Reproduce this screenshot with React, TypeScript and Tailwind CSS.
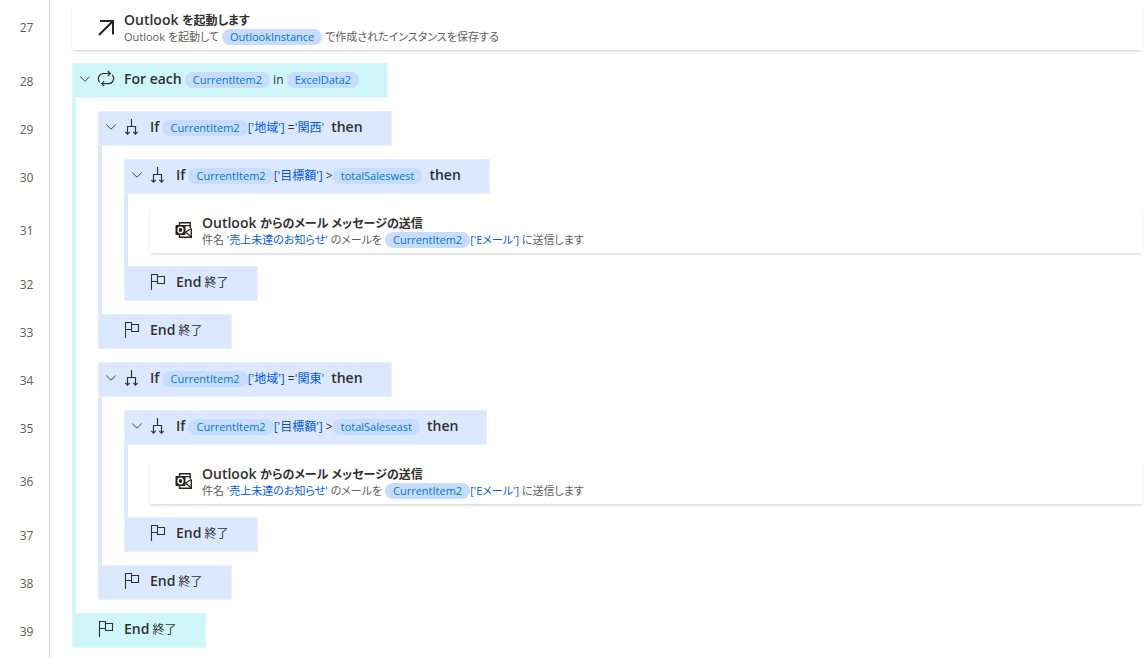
import React from 'react';
import type { ReactNode } from 'react';
import clsx from 'clsx';

type Tone = 'loop' | 'condition';

const LINES = [27, 28, 29, 30, 31, 32, 33, 34, 35, 36, 37, 38, 39];
const CARD_LINES = [27, 31, 36];

const toneBox: Record<Tone, string> = {
  loop: 'bg-[#cff6f9] border-[#dcf9fb]',
  condition: 'bg-[#dbe8ff] border-[#e7f0ff]',
};

const toneBar: Record<Tone, string> = {
  loop: 'border-[#cff6f9]',
  condition: 'border-[#dbe8ff]',
};

function ChevronIcon() {
  return (
    <svg viewBox="0 0 12 12" className="size-3" fill="none" stroke="#484644">
      <path d="M1.2 3.5 6 8.2l4.8-4.7" />
    </svg>
  );
}

function LaunchIcon() {
  return (
    <svg viewBox="0 0 18 18" className="size-[18px] shrink-0" fill="none" stroke="#252423" strokeWidth="2">
      <path d="M3 3h13v13.5M16 3 2 17" />
    </svg>
  );
}

function LoopIcon() {
  return (
    <svg viewBox="0 0 18 18" className="size-[18px] shrink-0" fill="none" stroke="#323130" strokeWidth="1.2">
      <path d="M2.8 12.4A5.3 5.3 0 0 1 6.5 3.5h6.6M15.2 4.8A5.3 5.3 0 0 1 11.5 13.7H4.9" />
      <path d="M10.8 1l2.5 2.5L10.8 6M7.2 11.2l-2.5 2.5 2.5 2.5" />
    </svg>
  );
}

function BranchIcon() {
  return (
    <svg viewBox="0 0 18 18" className="size-[18px] shrink-0" fill="none" stroke="#323130" strokeWidth="1.2">
      <path d="M8.5 1v7.5M4.5 16v-7.5h8V16" />
      <path d="M2.3 13.9l2.2 2.2 2.2-2.2M10.3 13.9l2.2 2.2 2.2-2.2" />
    </svg>
  );
}

function FlagIcon() {
  return (
    <svg viewBox="0 0 18 18" className="size-[18px] shrink-0" fill="none" stroke="#323130" strokeWidth="1.1">
      <path d="M2.5 17V1.5h6v7h-6M8.5 3.5h7v7h-7v-2" />
    </svg>
  );
}

function OutlookIcon() {
  return (
    <svg viewBox="0 0 18 18" className="size-[18px] shrink-0" fill="none">
      <path d="M4.5 5V1.8h10.7V7M16.3 7.5v8.8H4.5V13" stroke="#252423" strokeWidth="1.4" />
      <path d="M10 4.6h5.2M16.3 7.5 10.5 11l5.8 5" stroke="#252423" strokeWidth="1.2" />
      <rect x="0.5" y="4" width="10" height="10" rx="0.8" fill="#252423" />
      <ellipse cx="5.5" cy="9" rx="2.4" ry="2.7" stroke="#fff" strokeWidth="1.4" />
    </svg>
  );
}

function Variable({ children }: { children: ReactNode }) {
  return (
    <span className="inline-block h-4 rounded-full bg-[#c7dcff] px-2 text-[11px] leading-4 text-[#0078d4]">
      {children}
    </span>
  );
}

function Literal({ children }: { children: ReactNode }) {
  return <span className="text-[#0058f0]">{children}</span>;
}

function Keyword({ children, spaced }: { children: ReactNode; spaced?: boolean }) {
  return <span className={clsx('text-sm leading-5 font-semibold', spaced && 'ml-1')}>{children}</span>;
}

function Statement({ tone, icon, collapsible, children }: {
  tone: Tone;
  icon: ReactNode;
  collapsible?: boolean;
  children: ReactNode;
}) {
  return (
    <div className={clsx('flex h-[35px] w-fit items-center border pr-7 pb-[3px] pl-[6px] whitespace-nowrap', toneBox[tone])}>
      <div className="flex w-[18px] shrink-0 items-center">
        {collapsible && (
          <button type="button" aria-label="折りたたむ">
            <ChevronIcon />
          </button>
        )}
      </div>
      {icon}
      <div className="ml-[9px] pt-px text-xs leading-5">{children}</div>
    </div>
  );
}

function Block({ tone, icon, header, children }: {
  tone: Tone;
  icon: ReactNode;
  header: ReactNode;
  children: ReactNode;
}) {
  return (
    <div>
      <Statement tone={tone} icon={icon} collapsible>
        {header}
      </Statement>
      <div className={clsx('flex flex-col gap-[13px] border-l-4 py-[13px] pl-[22px]', toneBar[tone])}>
        {children}
      </div>
      <Statement tone={tone} icon={<FlagIcon />}>
        <Keyword>End</Keyword> 終了
      </Statement>
    </div>
  );
}

function ActionCard({ icon, title, children }: { icon: ReactNode; title: ReactNode; children: ReactNode }) {
  return (
    <div className="flex h-[46px] items-center bg-white pl-[25px] whitespace-nowrap shadow-[0_2px_3px_-1px_rgba(0,0,0,0.2)]">
      {icon}
      <div className="ml-[9px] pt-[2px]">
        <div className="text-sm leading-[18px] font-semibold">{title}</div>
        <div className="text-[11px] leading-4 text-[#605e5c]">{children}</div>
      </div>
    </div>
  );
}

function SendMail() {
  return (
    <ActionCard
      icon={<OutlookIcon />}
      title={<>Outlook <span className="text-xs">からのメール メッセージの送信</span></>}
    >
      件名 <Literal>'売上未達のお知らせ'</Literal> のメールを <Variable>CurrentItem2</Variable>
      <Literal>['Eメール']</Literal> に送信します
    </ActionCard>
  );
}

function RegionBlock({ region, total }: { region: string; total: string }) {
  return (
    <Block
      tone="condition"
      icon={<BranchIcon />}
      header={
        <>
          <Keyword>If</Keyword> <Variable>CurrentItem2</Variable>
          <Literal>['地域']</Literal> =<Literal>'{region}'</Literal> <Keyword spaced>then</Keyword>
        </>
      }
    >
      <Block
        tone="condition"
        icon={<BranchIcon />}
        header={
          <>
            <Keyword>If</Keyword> <Variable>CurrentItem2</Variable>
            <Literal>['目標額']</Literal> &gt;<Variable>{total}</Variable> <Keyword spaced>then</Keyword>
          </>
        }
      >
        <SendMail />
      </Block>
    </Block>
  );
}

function LineNumbers() {
  return (
    <div className="flex w-[50px] shrink-0 flex-col gap-[13px] border-r border-[#d6d6d6] pt-[5px] pl-1 text-center text-xs text-[#605e5c]">
      {LINES.map((line) => (
        <div
          key={line}
          className={clsx('flex items-center justify-center', CARD_LINES.includes(line) ? 'h-[46px]' : 'h-[35px]')}
        >
          {line}
        </div>
      ))}
    </div>
  );
}

export default function App() {
  return (
    <div className="flex min-h-screen bg-white font-['Open_Sans','Noto_Sans_CJK_JP',sans-serif] text-[#323130] [font-feature-settings:'palt']">
      <LineNumbers />
      <main className="flex min-w-0 flex-1 flex-col gap-[13px] pt-1 pr-1 pb-2 pl-[22px]">
        <ActionCard
          icon={<LaunchIcon />}
          title={<>Outlook <span className="text-xs">を起動します</span></>}
        >
          Outlook を起動して <Variable>OutlookInstance</Variable> で作成されたインスタンスを保存する
        </ActionCard>

        <Block
          tone="loop"
          icon={<LoopIcon />}
          header={
            <>
              <Keyword>For each</Keyword> <Variable>CurrentItem2</Variable> in <Variable>ExcelData2</Variable>
            </>
          }
        >
          <RegionBlock region="関西" total="totalSaleswest" />
          <RegionBlock region="関東" total="totalSaleseast" />
        </Block>
      </main>
    </div>
  );
}
